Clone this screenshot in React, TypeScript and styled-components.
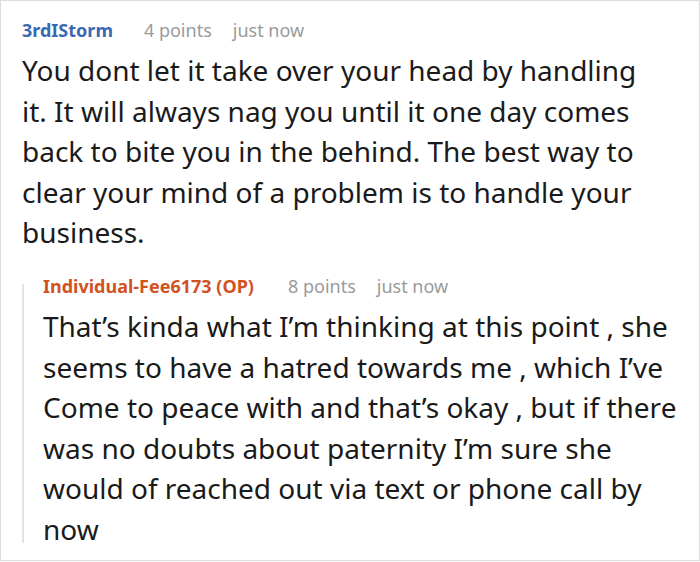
import React from "react";
import styled, { createGlobalStyle } from "styled-components";

const Global = createGlobalStyle`
  html, body { margin: 0; padding: 0; background: #fff; }
  body { font-family: "Noto Sans", "Open Sans", sans-serif; }
`;

const Frame = styled.div`
  box-sizing: border-box;
  width: 700px;
  height: 561px;
  border: 1px solid #dcdcdc;
  padding: 9px 14px 0 21px;
  overflow: hidden;
`;

const Comment = styled.div`
  display: flex;
  flex-direction: column;
`;

const Meta = styled.div`
  display: flex;
  align-items: center;
  gap: 21px;
  font-size: 18px;
  line-height: 40px;
`;

const Author = styled.span<{ $op?: boolean }>`
  font-weight: 700;
  color: ${(p) => (p.$op ? "#d1521f" : "#3a68b4")};
  margin-right: ${(p) => (p.$op ? "13px" : "10px")};
`;

const Info = styled.span`
  color: #9a9a9a;
`;

const Body = styled.p<{ $measure?: number }>`
  margin: 0;
  max-width: ${(p) => (p.$measure ? `${p.$measure}px` : "none")};
  font-size: 28px;
  line-height: 40.6px;
  color: #1a1a1a;
`;

const Replies = styled.div`
  position: relative;
  margin-top: 13px;
  padding-left: 21px;

  &::before {
    content: "";
    position: absolute;
    left: 0;
    top: 18px;
    bottom: 7px;
    width: 2px;
    background: #e4e4e4;
  }
`;

export default function App() {
  return (
    <>
      <Global />
      <Frame>
        <Comment>
          <Meta>
            <Author>3rdIStorm</Author>
            <Info>4 points</Info>
            <Info>just now</Info>
          </Meta>
          <Body $measure={628}>
            You dont let it take over your head by handling it. It will always nag you until it one day comes
            back to bite you in the behind. The best way to clear your mind of a problem is to handle your
            business.
          </Body>
          <Replies>
            <Comment>
              <Meta>
                <Author $op>Individual-Fee6173 (OP)</Author>
                <Info>8 points</Info>
                <Info>just now</Info>
              </Meta>
              <Body>
                That’s kinda what I’m thinking at this point , she seems to have a hatred towards me , which I’ve
                Come to peace with and that’s okay , but if there was no doubts about paternity I’m sure she
                would of reached out via text or phone call by now
              </Body>
            </Comment>
          </Replies>
        </Comment>
      </Frame>
    </>
  );
}
